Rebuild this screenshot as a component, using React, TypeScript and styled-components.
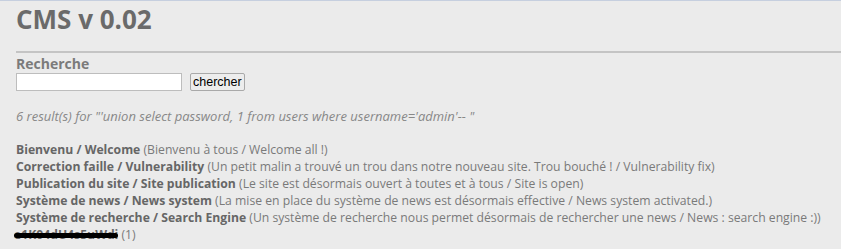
import React from "react";
import styled, { createGlobalStyle } from "styled-components";

const Global = createGlobalStyle`
  html, body { margin: 0; padding: 0; background: #ebebeb; }
  body { font-family: "Open Sans", "Noto Sans CJK KR", sans-serif; }
`;

const Page = styled.div`
  border-top: 1px solid #c6cfdf;
  padding: 0 0 0 16px;
  min-height: 248px;
  color: #666;
`;

const Title = styled.h1`
  margin: 0;
  padding-top: 2px;
  font-size: 26px;
  line-height: 32px;
  font-weight: 700;
  color: #6a6a6a;
`;

const Rule = styled.hr`
  margin: 16px 0 0 0;
  border: 0;
  border-top: 2px solid #c4c4c4;
  height: 0;
`;

const Label = styled.h2`
  margin: 2px 0 0 0;
  font-size: 14px;
  line-height: 18px;
  font-weight: 700;
  color: #7b7b7b;
`;

const SearchRow = styled.form`
  display: flex;
  align-items: center;
  gap: 8px;
  margin-top: 0;
`;

const Field = styled.input`
  box-sizing: border-box;
  width: 166px;
  height: 18px;
  border: 1px solid #bdbdbd;
  background: #fff;
  padding: 0 2px;
  margin: 0;
`;

const Button = styled.button`
  box-sizing: border-box;
  height: 18px;
  padding: 0 2px;
  margin: 0;
  font-family: "Liberation Sans", Arial, sans-serif;
  font-size: 12.5px;
  line-height: 14px;
  color: #000;
  background: #ededed;
  border: 1px solid #a9a9a9;
  border-radius: 2px;
`;

const Summary = styled.p`
  margin: 17px 0 0 0;
  font-size: 13px;
  line-height: 16px;
  font-style: italic;
  color: #888;
`;

const List = styled.ul`
  list-style: none;
  margin: 17px 0 0 0;
  padding: 0;
`;

const Item = styled.li`
  font-size: 12.2px;
  line-height: 17px;
  color: #7a7a7a;
  white-space: nowrap;
`;

const ItemTitle = styled.b`
  font-weight: 700;
  color: #666;
`;

const Redacted = styled.span`
  position: relative;
  display: inline-block;
  font-weight: 700;
  color: #666;
  margin-left: -2px;
  &::after {
    content: "";
    position: absolute;
    left: 0;
    right: 0;
    top: 7px;
    height: 5px;
    border-radius: 3px;
    background: #000;
  }
`;

const news = [
  ["Bienvenu / Welcome", "Bienvenu à tous / Welcome all !"],
  [
    "Correction faille / Vulnerability",
    "Un petit malin a trouvé un trou dans notre nouveau site. Trou bouché ! / Vulnerability fix",
  ],
  ["Publication du site / Site publication", "Le site est désormais ouvert à toutes et à tous / Site is open"],
  ["Système de news / News system", "La mise en place du système de news est désormais effective / News system activated."],
  [
    "Système de recherche / Search Engine",
    "Un système de recherche nous permet désormais de rechercher une news / News : search engine :)",
  ],
];

export default function App() {
  return (
    <>
      <Global />
      <Page>
        <Title>CMS v 0.02</Title>
        <Rule />
        <Label>Recherche</Label>
        <SearchRow onSubmit={(e) => e.preventDefault()}>
          <Field type="text" />
          <Button type="submit">chercher</Button>
        </SearchRow>
        <Summary>6 result(s) for "'union select password, 1 from users where username='admin'-- "</Summary>
        <List>
          {news.map(([t, d]) => (
            <Item key={t}>
              <ItemTitle>{t}</ItemTitle> ({d})
            </Item>
          ))}
          <Item>
            <Redacted>e1K04dU4s5uWdi</Redacted> (1)
          </Item>
        </List>
      </Page>
    </>
  );
}
